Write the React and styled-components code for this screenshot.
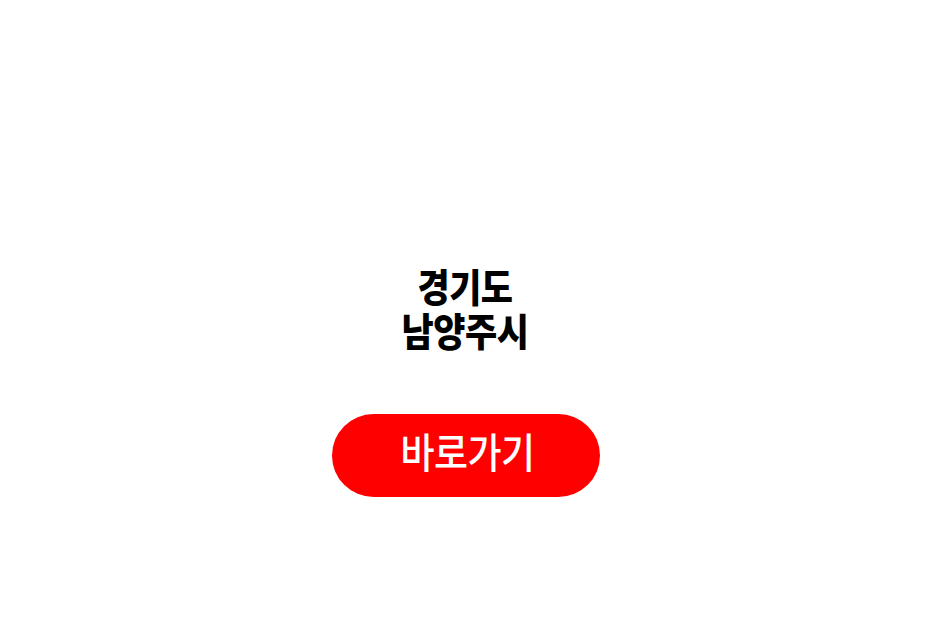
import React from "react";
import styled, { createGlobalStyle } from "styled-components";

const GlobalStyle = createGlobalStyle`
  html, body {
    margin: 0;
    padding: 0;
    background: #ffffff;
  }
`;

const Page = styled.div`
  width: 930px;
  height: 620px;
  display: flex;
  flex-direction: column;
  align-items: center;
  font-family: "Noto Sans CJK KR", "Noto Sans", sans-serif;
`;

const Title = styled.h1`
  margin: 267px 0 0;
  font-size: 35px;
  font-weight: 900;
  line-height: 40px;
  color: #000;
  text-align: center;
  letter-spacing: -0.5px;
  transform: scaleY(1.1);
`;

const GoButton = styled.a`
  box-sizing: border-box;
  margin-top: 67px;
  margin-left: 1px;
  width: 268px;
  height: 83px;
  padding-bottom: 12px;
  border-radius: 42px;
  background: #ff0000;
  color: #fff;
  display: flex;
  align-items: center;
  justify-content: center;
  font-size: 37px;
  font-weight: 500;
  letter-spacing: -0.5px;
  text-decoration: none;
`;

const Label = styled.span`
  display: inline-block;
  transform: scaleY(1.1);
  margin-left: 4px;
`;

export default function App() {
  return (
    <>
      <GlobalStyle />
      <Page>
        <Title>
          경기도
          <br />
          남양주시
        </Title>
        <GoButton href="#">
          <Label>바로가기</Label>
        </GoButton>
      </Page>
    </>
  );
}
